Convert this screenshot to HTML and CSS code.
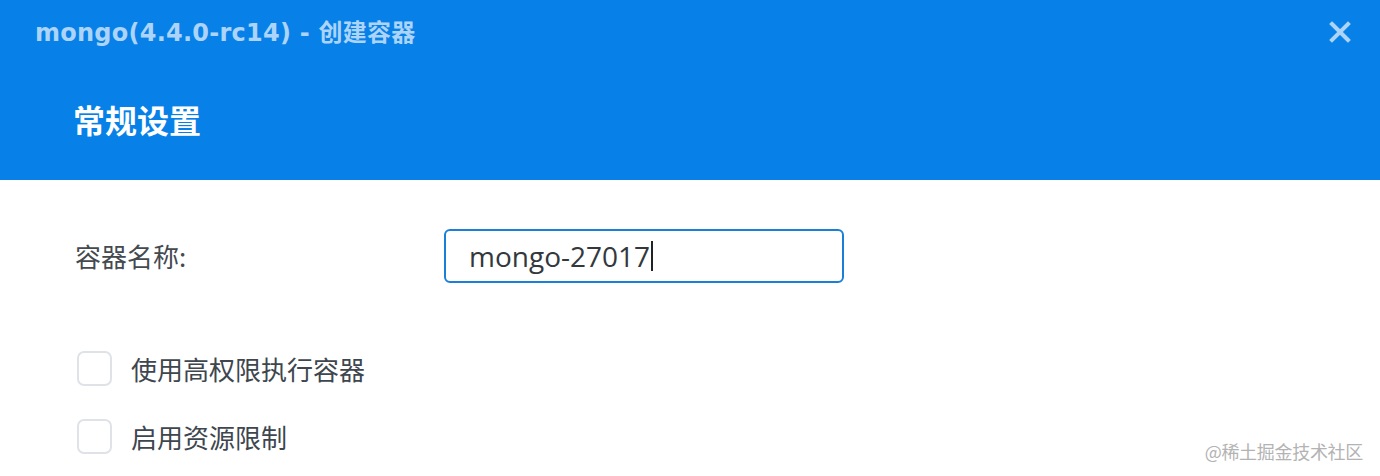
FILE: index.html
```html
<!DOCTYPE html>
<html lang="zh-CN">
<head>
<meta charset="utf-8">
<title>mongo - 创建容器</title>
<link rel="stylesheet" href="styles.css">
</head>
<body>
<div class="dialog">
  <header class="header">
    <div class="titlebar">
      <span class="title">mongo(4.4.0-rc14) - 创建容器</span>
      <span class="close" aria-label="关闭">
        <svg width="22" height="22" viewBox="0 0 22 22"><path d="M3 3 L19 19 M19 3 L3 19" stroke="currentColor" stroke-width="4" stroke-linecap="square" fill="none"/></svg>
      </span>
    </div>
    <h1 class="section-title">常规设置</h1>
  </header>
  <main class="content">
    <div class="form-row">
      <label class="field-label">容器名称:</label>
      <div class="text-input"><span class="value">mongo-27017</span><span class="caret"></span></div>
    </div>
    <div class="checks">
      <div class="check-row"><span class="checkbox"></span><span class="check-label">使用高权限执行容器</span></div>
      <div class="check-row"><span class="checkbox"></span><span class="check-label">启用资源限制</span></div>
    </div>
  </main>
  <div class="watermark">@稀土掘金技术社区</div>
</div>
</body>
</html>
```
FILE: styles.css
```css
html, body {
  margin: 0;
  padding: 0;
  background: #ffffff;
}
body {
  font-family: "Noto Sans CJK SC", "Noto Sans", sans-serif;
}
.dialog {
  position: relative;
  width: 1380px;
  height: 476px;
  overflow: hidden;
}
.header {
  background: #0781e8;
  height: 180px;
  box-sizing: border-box;
}
.titlebar {
  height: 60px;
  display: flex;
  align-items: center;
  justify-content: space-between;
  padding: 0 29px 0 35px;
}
.title {
  font-family: "DejaVu Sans", "Noto Sans CJK SC", sans-serif;
  font-weight: bold;
  font-size: 24px;
  color: #acd4f8;
  letter-spacing: 0.25px;
}
.close {
  display: flex;
  color: #acd4f8;
  margin-top: 4px;
}
.section-title {
  margin: 39px 0 0 73px;
  font-family: "Noto Sans CJK SC", sans-serif;
  font-weight: bold;
  font-size: 32px;
  line-height: 40px;
  height: 40px;
  color: #ffffff;
}
.content {
  padding: 49px 0 0 75px;
}
.form-row {
  display: flex;
  align-items: center;
}
.field-label {
  width: 369px;
  font-size: 26px;
  color: #444a50;
  line-height: 54px;
}
.text-input {
  width: 400px;
  height: 54px;
  box-sizing: border-box;
  border: 2px solid #1b7fd6;
  border-radius: 6px;
  display: flex;
  align-items: center;
  padding-left: 23px;
}
.value {
  font-family: "Open Sans", "Noto Sans", sans-serif;
  font-size: 28px;
  color: #33383d;
  line-height: 1;
}
.caret {
  width: 2px;
  height: 30px;
  background: #222;
  margin-left: 1px;
}
.checks {
  margin-top: 68px;
  display: flex;
  flex-direction: column;
  gap: 33px;
}
.check-row {
  display: flex;
  align-items: center;
  height: 35px;
  padding-left: 2px;
}
.checkbox {
  width: 35px;
  height: 35px;
  box-sizing: border-box;
  border: 2px solid #dfe3e7;
  border-radius: 7px;
  background: #fff;
}
.check-label {
  margin-left: 19px;
  font-size: 26px;
  color: #3e464e;
}
.watermark {
  position: absolute;
  right: 17px;
  bottom: 12px;
  font-size: 18px;
  color: #b3b3b3;
  letter-spacing: -0.3px;
}
```
